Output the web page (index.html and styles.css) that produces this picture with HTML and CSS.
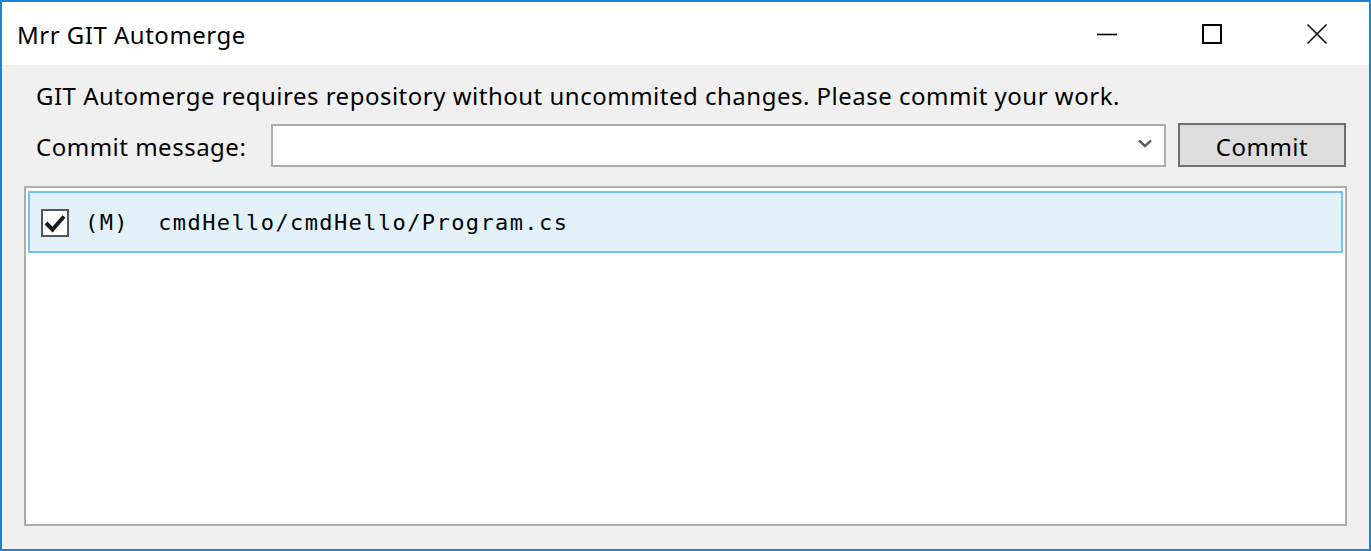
FILE: index.html
```html
<!DOCTYPE html>
<html>
<head>
<meta charset="utf-8">
<link rel="stylesheet" href="styles.css">
</head>
<body>
<div class="window">
  <div class="titlebar">
    <div class="title">Mrr GIT Automerge</div>
    <div class="caption-buttons">
      <div class="cap-btn"><svg width="20" height="20" viewBox="0 0 20 20"><line x1="0" y1="10.5" x2="20" y2="10.5" stroke="#000" stroke-width="1.6"/></svg></div>
      <div class="cap-btn"><svg width="20" height="20" viewBox="0 0 20 20"><rect x="1" y="1" width="18" height="18" fill="none" stroke="#000" stroke-width="2"/></svg></div>
      <div class="cap-btn"><svg width="20" height="20" viewBox="0 0 20 20"><path d="M0.5 0.5 L19.5 19.5 M19.5 0.5 L0.5 19.5" stroke="#000" stroke-width="1.5" fill="none"/></svg></div>
    </div>
  </div>
  <div class="content">
    <div class="message">GIT Automerge requires repository without uncommited changes. Please commit your work.</div>
    <div class="commit-row">
      <div class="label">Commit message:</div>
      <div class="combo">
        <svg class="chevron" width="14" height="9" viewBox="0 0 14 9"><path d="M1 1.5 L7 7 L13 1.5" stroke="#606060" stroke-width="2.4" fill="none"/></svg>
      </div>
      <div class="button">Commit</div>
    </div>
    <div class="listbox">
      <div class="item selected">
        <div class="checkbox"><svg width="24" height="24" viewBox="0 0 24 24"><path d="M3 12 L9.5 18.5 L21 5.5" stroke="#1a1a1a" stroke-width="4" fill="none" stroke-linejoin="miter"/></svg></div>
        <div class="path">(M)  cmdHello/cmdHello/Program.cs</div>
      </div>
    </div>
  </div>
</div>
</body>
</html>
```
FILE: styles.css
```css
html, body {
  margin: 0;
  padding: 0;
  background: #ffffff;
}
.window {
  width: 1371px;
  height: 551px;
  box-sizing: border-box;
  border: 2px solid #1883d7;
  display: flex;
  flex-direction: column;
  font-family: "Noto Sans", "Open Sans", sans-serif;
  font-size: 24px;
  letter-spacing: 0.5px;
  color: #000;
}
.titlebar {
  height: 63px;
  background: #ffffff;
  display: flex;
  align-items: center;
  justify-content: space-between;
  flex-shrink: 0;
}
.title {
  padding-left: 15px;
  line-height: 32px;
  padding-top: 2px;
}
.caption-buttons {
  display: flex;
  height: 100%;
}
.cap-btn {
  width: 105px;
  display: flex;
  align-items: center;
  justify-content: center;
}
.cap-btn svg { display: block; }
.content {
  flex: 1;
  background: #f0f0f0;
  padding: 0 22px 23px 22px;
  display: flex;
  flex-direction: column;
}
.message {
  margin-top: 15px;
  padding-left: 12px;
  line-height: 32px;
  height: 32px;
  white-space: nowrap;
}
.commit-row {
  margin-top: 11px;
  height: 44px;
  display: flex;
  align-items: center;
}
.label {
  width: 247px;
  padding-left: 12px;
  box-sizing: border-box;
  line-height: 32px;
  padding-top: 4px;
  flex-shrink: 0;
}
.combo {
  flex: 1;
  height: 43px;
  box-sizing: border-box;
  margin-top: 1px;
  border: 2px solid #adadad;
  background: #ffffff;
  display: flex;
  align-items: center;
  justify-content: flex-end;
  padding-right: 12px;
}
.chevron { display: block; margin-top: -4px; }
.button {
  margin-left: 12px;
  margin-right: 1px;
  width: 168px;
  height: 44px;
  box-sizing: border-box;
  border: 2px solid #707070;
  background: #dddddd;
  display: flex;
  align-items: center;
  justify-content: center;
  line-height: 32px;
  padding-top: 4px;
}
.listbox {
  margin-top: 19px;
  height: 340px;
  box-sizing: border-box;
  border: 2px solid #adadad;
  background: #ffffff;
  padding: 3px 2px 2px 2px;
}
.item {
  height: 62px;
  box-sizing: border-box;
  display: flex;
  align-items: center;
  padding-left: 11px;
}
.item.selected {
  background: #e3f2fa;
  border: 2px solid #77c3ec;
}
.checkbox {
  width: 28px;
  height: 28px;
  box-sizing: border-box;
  border: 2px solid #555555;
  background: #ffffff;
  flex-shrink: 0;
  margin-top: 1px;
}
.checkbox svg { display: block; }
.path {
  margin-left: 16px;
  font-family: "DejaVu Sans Mono", "Liberation Mono", monospace;
  font-size: 22px;
  letter-spacing: 1.4px;
  white-space: pre;
  color: #000;
}
```
